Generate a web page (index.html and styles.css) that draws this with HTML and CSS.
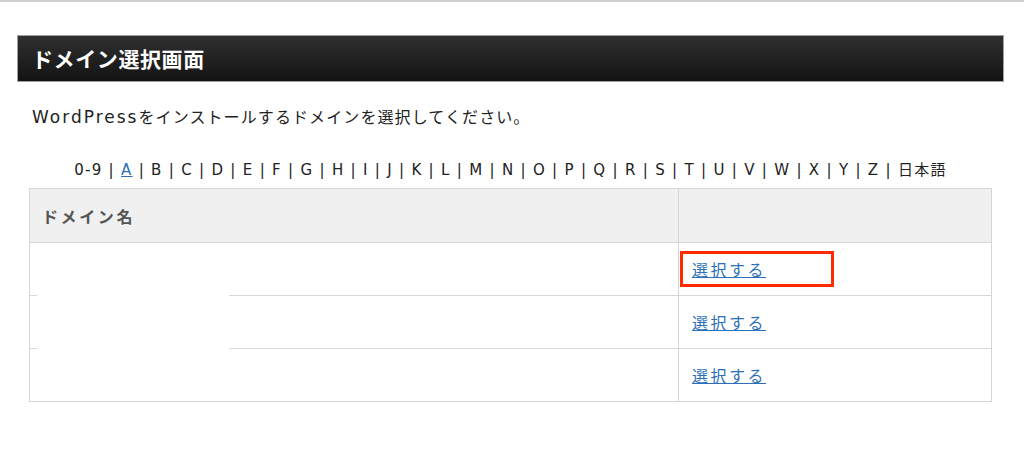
FILE: index.html
```html
<!DOCTYPE html>
<html lang="ja">

<head>
    <meta charset="UTF-8" />
    <title>ドメイン選択画面</title>
    <link rel="stylesheet" href="styles.css">
</head>

<body>
    <div class="topline"></div>

    <div class="page">
        <h2 class="title">ドメイン選択画面</h2>

        <p class="lead"><span class="latin">WordPress</span>をインストールするドメインを選択してください。</p>

        <div class="index">
            0-9 | <a href="#">A</a> | B | C | D | E | F | G | H | I | J | K | L | M | N | O | P | Q | R | S | T | U | V | W | X | Y | Z | 日本語
        </div>

        <div class="tableWrap">
            <table class="domains">
                <thead>
                    <tr>
                        <th class="nameCol">ドメイン名</th>
                        <th></th>
                    </tr>
                </thead>
                <tbody>
                    <tr>
                        <td></td>
                        <td class="pick"><span class="mark"></span><a href="#">選択する</a></td>
                    </tr>
                    <tr>
                        <td></td>
                        <td class="pick"><a href="#">選択する</a></td>
                    </tr>
                    <tr>
                        <td></td>
                        <td class="pick"><a href="#">選択する</a></td>
                    </tr>
                </tbody>
            </table>
            <!-- hidden domain names -->
            <div class="cover"></div>
        </div>
    </div>
</body>

</html>
```

FILE: styles.css
```css
* {
    box-sizing: border-box;
}

body {
    margin: 0;
    background: #fff;
    color: #222;
    font-family: "DejaVu Sans", "Noto Sans CJK JP", sans-serif;
}

.topline {
    height: 2px;
    background: #cfcfcf;
}

.page {
    padding: 33px 20px 0 17px;
}

.title {
    margin: 0;
    height: 47px;
    padding-left: 14px;
    line-height: 44px;
    font-size: 21px;
    letter-spacing: 0.6px;
    font-weight: bold;
    color: #fff;
    border: 1px solid #a0a0a0;
    background: linear-gradient(#303030, #131313);
    font-family: "Noto Sans CJK JP", sans-serif;
}

.lead {
    margin: 25px 0 0 15px;
    height: 22px;
    font-size: 16px;
    letter-spacing: 1.1px;
    line-height: 22px;
}

.lead .latin {
    font-size: 17px;
    line-height: 1;
    letter-spacing: 2px;
}

.index {
    margin: 30px 0 7px;
    width: 987px;
    text-align: center;
    font-size: 15px;
    letter-spacing: 1.3px;
    line-height: 22px;
}

.index a {
    color: #2d6fb8;
}

.tableWrap {
    position: relative;
    margin: 0 12px;
}

.domains {
    width: 963px;
    border-collapse: collapse;
    font-size: 15px;
}

.domains th,
.domains td {
    border: 1px solid #d6d6d6;
    text-align: left;
}

.domains th {
    height: 54px;
    background: #f0f0f0;
    color: #555;
    font-size: 16px;
    letter-spacing: 2.6px;
    font-weight: bold;
    padding-left: 12px;
    font-family: "Noto Sans CJK JP", sans-serif;
}

.domains .nameCol {
    width: 649px;
}

.domains td {
    height: 53px;
}

.pick {
    position: relative;
    padding-left: 13px;
}

.pick a {
    color: #2d6fb8;
    font-size: 16px;
    letter-spacing: 2.5px;
    font-family: "Noto Sans CJK JP", sans-serif;
}

.mark {
    position: absolute;
    left: 1px;
    top: 8px;
    width: 154px;
    height: 36px;
    border: 3px solid #ff2a00;
}

.cover {
    position: absolute;
    left: 8px;
    top: 95px;
    width: 192px;
    height: 70px;
    background: #fff;
}
```
